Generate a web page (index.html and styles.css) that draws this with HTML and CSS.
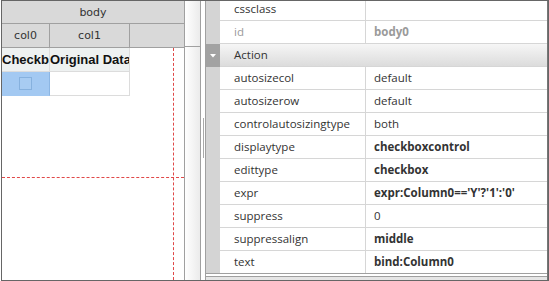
FILE: index.html
```html
<!DOCTYPE html>
<html lang="en">
  <head>
    <meta charset="UTF-8" />
    <meta name="viewport" content="width=device-width, initial-scale=1.0" />
    <title>Grid Designer</title>
    <link rel="stylesheet" href="styles.css">
  </head>
  <body>
    <div class="frame">
      <div class="designer">
        <div class="head-row first">
          <div class="hcell span">body</div>
        </div>
        <div class="head-row">
          <div class="hcell c0">col0</div>
          <div class="hcell c1">col1</div>
          <div class="hcell rest"></div>
        </div>
        <div class="data-row">
          <div class="dcell c0">Checkbox</div>
          <div class="dcell c1">Original Data</div>
        </div>
        <div class="data-row">
          <div class="dcell c0 selected"><span class="check"></span></div>
          <div class="dcell c1 blank"></div>
        </div>
        <div class="guide guide-v"></div>
        <div class="guide guide-h"></div>
      </div>

      <div class="splitter">
        <div class="splitter-head"></div>
      </div>
      <div class="gap"><div class="thumb"></div></div>

      <div class="props">
        <div class="pgrid">
          <div class="prow top">
            <div class="gutter"></div>
            <div class="pname">cssclass</div>
            <div class="pval"></div>
          </div>
          <div class="prow">
            <div class="gutter"></div>
            <div class="pname muted">id</div>
            <div class="pval muted bold">body0</div>
          </div>
          <div class="prow">
            <div class="gutter cat-toggle">
              <svg width="6" height="4" viewBox="0 0 6 4"><polygon points="0,0 6,0 3,3.5" fill="#fff"/></svg>
            </div>
            <div class="pcat">Action</div>
          </div>
          <div class="prow">
            <div class="gutter"></div>
            <div class="pname">autosizecol</div>
            <div class="pval">default</div>
          </div>
          <div class="prow">
            <div class="gutter"></div>
            <div class="pname">autosizerow</div>
            <div class="pval">default</div>
          </div>
          <div class="prow">
            <div class="gutter"></div>
            <div class="pname">controlautosizingtype</div>
            <div class="pval">both</div>
          </div>
          <div class="prow">
            <div class="gutter"></div>
            <div class="pname">displaytype</div>
            <div class="pval bold">checkboxcontrol</div>
          </div>
          <div class="prow">
            <div class="gutter"></div>
            <div class="pname">edittype</div>
            <div class="pval bold">checkbox</div>
          </div>
          <div class="prow">
            <div class="gutter"></div>
            <div class="pname">expr</div>
            <div class="pval bold">expr:Column0=='Y'?'1':'0'</div>
          </div>
          <div class="prow">
            <div class="gutter"></div>
            <div class="pname">suppress</div>
            <div class="pval">0</div>
          </div>
          <div class="prow">
            <div class="gutter"></div>
            <div class="pname">suppressalign</div>
            <div class="pval bold">middle</div>
          </div>
          <div class="prow last">
            <div class="gutter"></div>
            <div class="pname">text</div>
            <div class="pval bold">bind:Column0</div>
          </div>
        </div>
        <div class="hscroll"></div>
      </div>
    </div>
  </body>
</html>
```

FILE: styles.css
```css
body {
  margin: 0;
  background: #fff;
}

.frame {
  display: flex;
  box-sizing: border-box;
  width: 548px;
  height: 281px;
  margin-left: 1px;
  border: 1px solid #666;
  overflow: hidden;
}

/* left: grid designer */
.designer {
  position: relative;
  width: 182px;
  flex: none;
  border-right: 1px solid #a0a0a0;
  font-family: "DejaVu Sans", sans-serif;
  color: #333;
}
.head-row {
  display: flex;
  height: 23px;
  background-color: #d9d9d9;
  border-bottom: 1px solid #a0a0a0;
}
.head-row.first {
  height: 22px;
}
.hcell {
  display: flex;
  align-items: center;
  justify-content: center;
  font-size: 11px;
  box-sizing: border-box;
}
.hcell.span {
  width: 100%;
}
.c0 {
  width: 48px;
  border-right: 1px solid #a0a0a0;
}
.c1 {
  width: 80px;
  border-right: 1px solid #a0a0a0;
}
.hcell.rest {
  flex: 1;
}

.data-row {
  display: flex;
  height: 24px;
}
.dcell {
  box-sizing: border-box;
  height: 24px;
  line-height: 23px;
  font-family: "Liberation Sans", Arial, sans-serif;
  font-size: 13px;
  font-weight: bold;
  color: #111;
  white-space: nowrap;
  overflow: hidden;
  background-color: #eef1f1;
  border-right: 1px solid #dcdcdc;
  border-bottom: 1px solid #dcdcdc;
}
.dcell.selected {
  display: flex;
  align-items: center;
  justify-content: center;
  background-color: #a3c9f2;
  border-right-color: #8cb6e3;
  border-bottom-color: #a3c9f2;
}
.dcell.blank {
  background-color: #fff;
}
.check {
  width: 11px;
  height: 11px;
  border: 1px solid #86b1de;
  background-color: #a8ccf2;
}

.guide {
  position: absolute;
}
.guide-v {
  left: 171px;
  top: 47px;
  bottom: 0;
  border-left: 1px dashed #e04848;
}
.guide-h {
  left: 0;
  right: 0;
  top: 176px;
  border-top: 1px dashed #e04848;
}

/* splitter between panes */
.splitter {
  width: 15px;
  flex: none;
  border-right: 1px solid #a0a0a0;
  background: linear-gradient(to right, #ffffff, #ebebeb);
}
.splitter-head {
  height: 45px;
  border-bottom: 1px solid #a0a0a0;
}
.gap {
  width: 4px;
  flex: none;
  padding-top: 117px;
}
.thumb {
  width: 1px;
  height: 40px;
  margin-left: 2px;
  background-color: #a8a8a8;
}

/* right: property grid */
.props {
  flex: 1;
  display: flex;
  flex-direction: column;
  border-left: 1px solid #a0a0a0;
  border-right: 1px solid #777;
  font-family: "Open Sans", sans-serif;
  font-size: 11.5px;
  color: #333;
}
.pgrid {
  height: 272px;
  border-bottom: 1px solid #a0a0a0;
  overflow: hidden;
  flex: none;
}
.prow {
  display: flex;
  height: 23px;
}
.prow.top {
  margin-top: -3px;
}
.gutter {
  width: 14px;
  flex: none;
  background-color: #d4d4d4;
}
.cat-toggle {
  display: flex;
  align-items: center;
  justify-content: center;
  background-color: #a2a2a2;
}
.pname,
.pval,
.pcat {
  box-sizing: border-box;
  height: 23px;
  line-height: 22px;
  border-bottom: 1px solid #d6d6d6;
  white-space: nowrap;
  overflow: hidden;
}
.pname {
  width: 146px;
  padding-left: 14px;
  border-right: 1px solid #d6d6d6;
}
.pval {
  flex: 1;
  padding-left: 8px;
}
.pcat {
  flex: 1;
  padding-left: 14px;
  background: linear-gradient(#f6f6f6, #dcdcdc);
}
.prow.last .pname,
.prow.last .pval {
  border-bottom: none;
}
.muted {
  color: #9a9a9a;
}
.bold {
  font-weight: bold;
}

.hscroll {
  margin-top: 2px;
  height: 3px;
  border-top: 1px solid #a0a0a0;
  background-color: #e6e6e6;
}
```
